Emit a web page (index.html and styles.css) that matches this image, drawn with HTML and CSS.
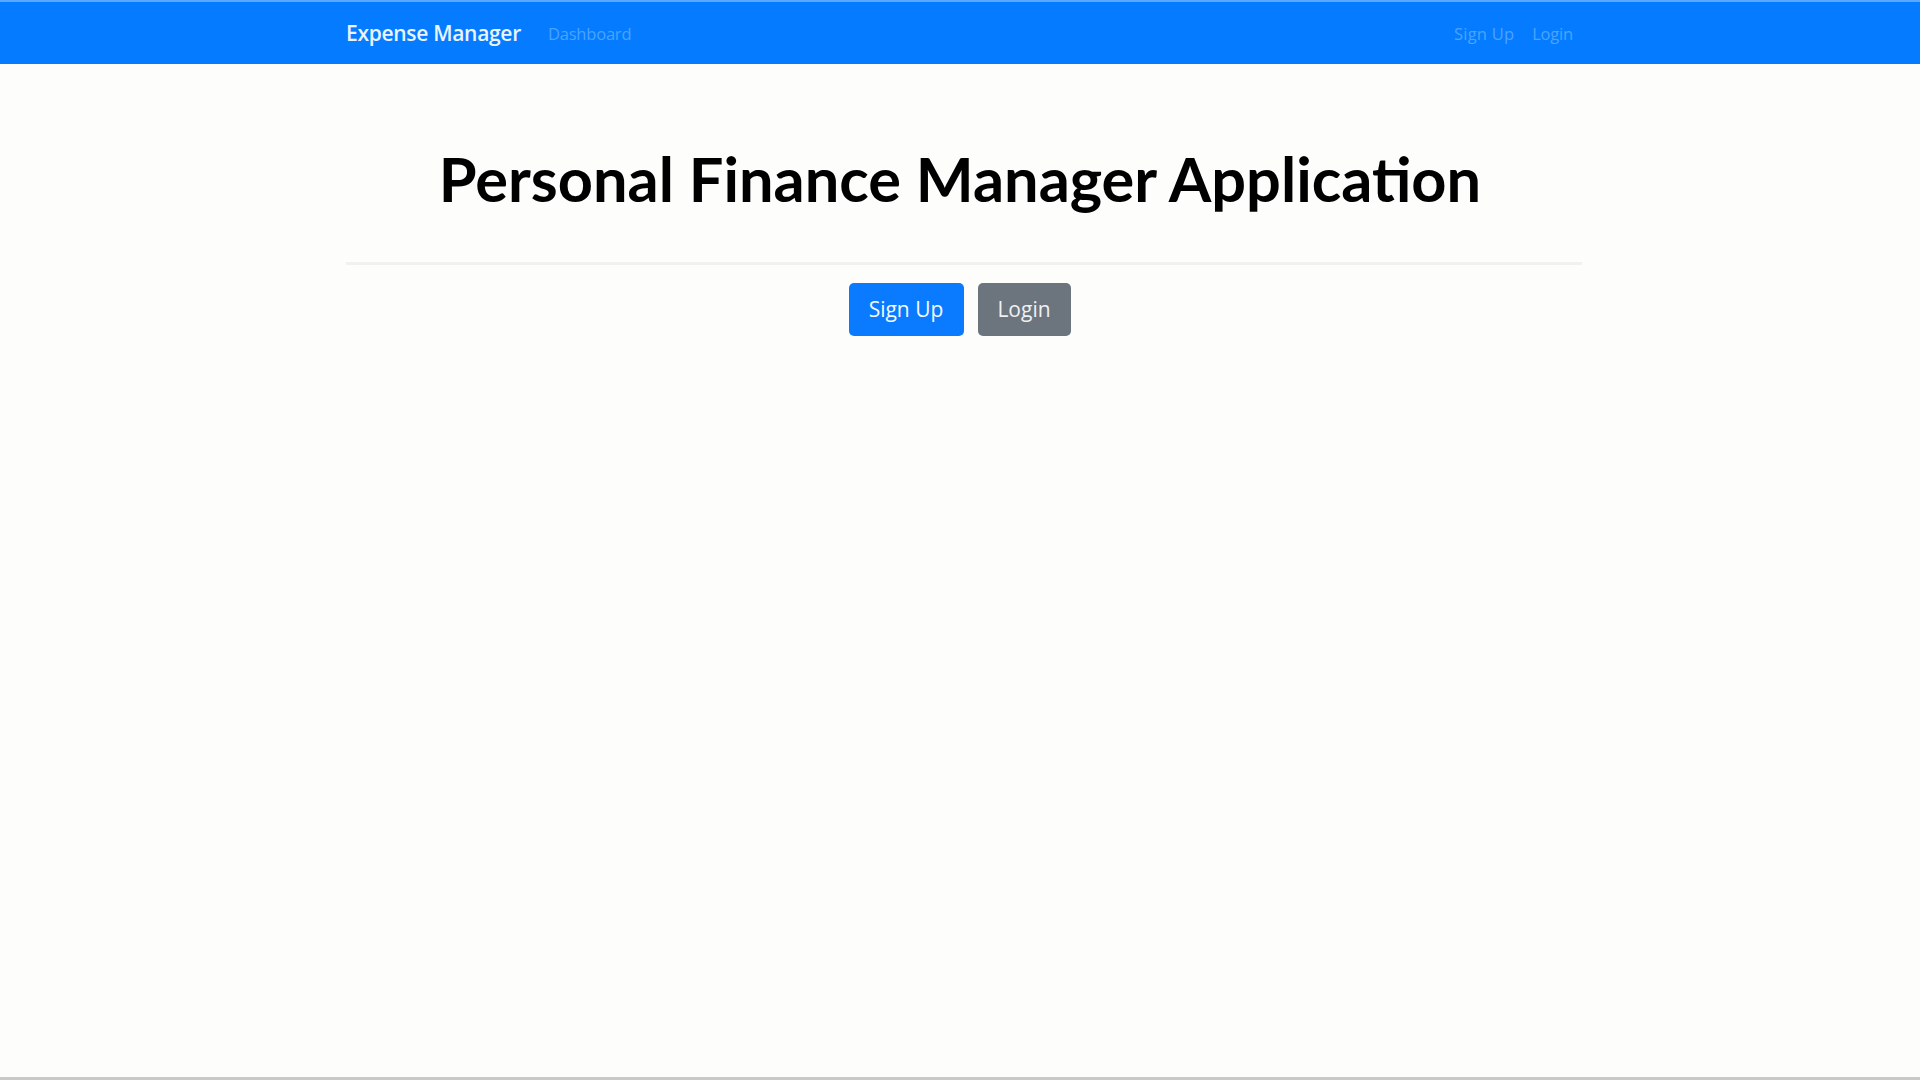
FILE: index.html
```html
<!DOCTYPE html>
<html lang="en">
<head>
<meta charset="utf-8">
<title>Expense Manager</title>
<link rel="stylesheet" href="styles.css">
</head>
<body>
<nav class="navbar">
  <div class="container nav-inner">
    <div class="nav-left">
      <a class="brand" href="#">Expense Manager</a>
      <a class="nav-link" href="#">Dashboard</a>
    </div>
    <div class="nav-right">
      <a class="nav-link" href="#">Sign Up</a>
      <a class="nav-link" href="#">Login</a>
    </div>
  </div>
</nav>
<main class="container main">
  <h1 class="title">Personal Finance Manager Application</h1>
  <hr class="divider">
  <div class="actions">
    <a class="btn btn-primary" href="#">Sign Up</a>
    <a class="btn btn-secondary" href="#">Login</a>
  </div>
</main>
<div class="bottom-line"></div>
</body>
</html>
```
FILE: styles.css
```css
* { box-sizing: border-box; }
html, body { margin: 0; padding: 0; height: 100%; }
body {
  background: #fdfdfc;
  font-family: "Open Sans", "Noto Sans", sans-serif;
  display: flex;
  flex-direction: column;
}
a { text-decoration: none; }
.container {
  width: 1236px;
  margin-left: calc(50% - 614px);
}
.navbar {
  background: #057cff;
  height: 64px;
  border-top: 2px solid #5aa8ff;
  flex: none;
}
.nav-inner {
  height: 100%;
  display: flex;
  align-items: center;
  justify-content: space-between;
}
.nav-left, .nav-right { display: flex; align-items: center; }
.brand {
  color: #eaf4ff;
  font-size: 21px;
  font-weight: 600;
  margin-right: 18px;
  letter-spacing: -0.3px;
}
.nav-link {
  color: #4aa4ff;
  font-size: 16.5px;
  padding: 0 9px;
  letter-spacing: -0.2px;
}
.nav-right .nav-link:first-child { letter-spacing: 0.2px; }
.main { flex: 1; }
.title {
  margin: 0;
  padding: 78px 8px 0 0;
  text-align: center;
  font-family: "Lato", "Noto Sans", sans-serif;
  font-weight: 700;
  font-size: 61.3px;
  line-height: 1.2;
  color: #000;
}
.divider {
  border: 0;
  border-top: 3px solid #f1f1f1;
  margin: 46px 0 0 0;
}
.actions {
  display: flex;
  justify-content: center;
  gap: 14px;
  margin-top: 18px;
  padding-right: 9px;
}
.btn {
  display: inline-flex;
  align-items: center;
  justify-content: center;
  height: 53px;
  border-radius: 5px;
  color: #f4f9ff;
  font-size: 21px;
}
.btn-primary { background: #0a7bff; width: 115px; }
.btn-secondary { background: #6c757d; width: 93px; color: #eef0f2; }
.bottom-line {
  flex: none;
  height: 3px;
  background: #c9c9c9;
}
```
